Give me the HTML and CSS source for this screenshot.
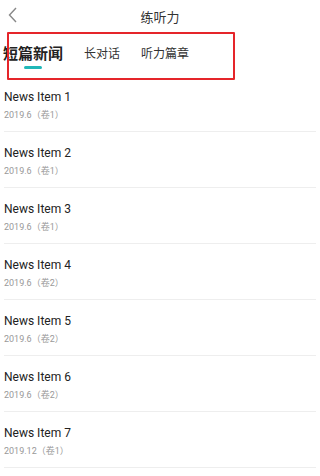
FILE: index.html
```html
<!DOCTYPE html>
<html lang="zh">
<head>
<meta charset="utf-8">
<link rel="stylesheet" href="styles.css">
</head>
<body>
<div class="page">
  <header class="nav">
    <span class="back"><svg width="9" height="16" viewBox="0 0 9 16"><path d="M8 1 L1.5 8 L8 15" fill="none" stroke="#888" stroke-width="1.4"/></svg></span>
    <span class="title">练听力</span>
  </header>
  <div class="tabs">
    <div class="tab active">短篇新闻<span class="bar"></span></div>
    <div class="tab">长对话</div>
    <div class="tab">听力篇章</div>
  </div>
  <ul class="list">
    <li class="item"><div class="name">News Item 1</div><div class="date">2019.6（卷1）</div></li>
    <li class="item"><div class="name">News Item 2</div><div class="date">2019.6（卷1）</div></li>
    <li class="item"><div class="name">News Item 3</div><div class="date">2019.6（卷1）</div></li>
    <li class="item"><div class="name">News Item 4</div><div class="date">2019.6（卷2）</div></li>
    <li class="item"><div class="name">News Item 5</div><div class="date">2019.6（卷2）</div></li>
    <li class="item"><div class="name">News Item 6</div><div class="date">2019.6（卷2）</div></li>
    <li class="item"><div class="name">News Item 7</div><div class="date">2019.12（卷1）</div></li>
  </ul>
</div>
</body>
</html>
```

FILE: styles.css
```css
* { box-sizing: border-box; }
html, body { margin: 0; padding: 0; background: #fff; }
body {
  font-family: Roboto, "Noto Sans CJK SC", sans-serif;
  color: #222;
  width: 320px;
  height: 476px;
  overflow: hidden;
}
.nav {
  height: 32px;
  display: flex;
  align-items: center;
  justify-content: center;
  position: relative;
}
.back {
  position: absolute;
  left: 8px;
  top: 7px;
  display: flex;
}
.title {
  font-family: "Noto Sans CJK SC", sans-serif;
  font-size: 13px;
  color: #333;
}
.tabs {
  position: relative;
  height: 44px;
  display: flex;
  align-items: center;
  gap: 21px;
  padding-left: 3px;
  padding-bottom: 2px;
}
.tabs::after {
  content: "";
  position: absolute;
  left: 7px;
  top: 0;
  width: 224px;
  height: 44px;
  border: 2px solid #e5252a;
  border-radius: 1px;
}
.tab {
  font-family: "Noto Sans CJK SC", sans-serif;
  font-size: 12px;
  color: #333;
  position: relative;
  line-height: 20px;
}
.tab.active {
  font-size: 15px;
  font-weight: 700;
  color: #222;
}
.bar {
  position: absolute;
  left: 21px;
  top: 23px;
  width: 18px;
  height: 3px;
  border-radius: 2px;
  background: #20b8b8;
}
.list {
  list-style: none;
  margin: 0;
  padding: 0 4px;
}
.item {
  padding: 12px 0 9px;
  border-bottom: 1px solid #eeeeee;
  height: 56px;
}
.name {
  font-size: 12px;
  line-height: 18px;
  color: #222;
}
.date {
  font-family: Roboto, "Noto Sans CJK SC", sans-serif;
  font-size: 9px;
  line-height: 14px;
  margin-top: 2px;
  color: #999;
}
```
